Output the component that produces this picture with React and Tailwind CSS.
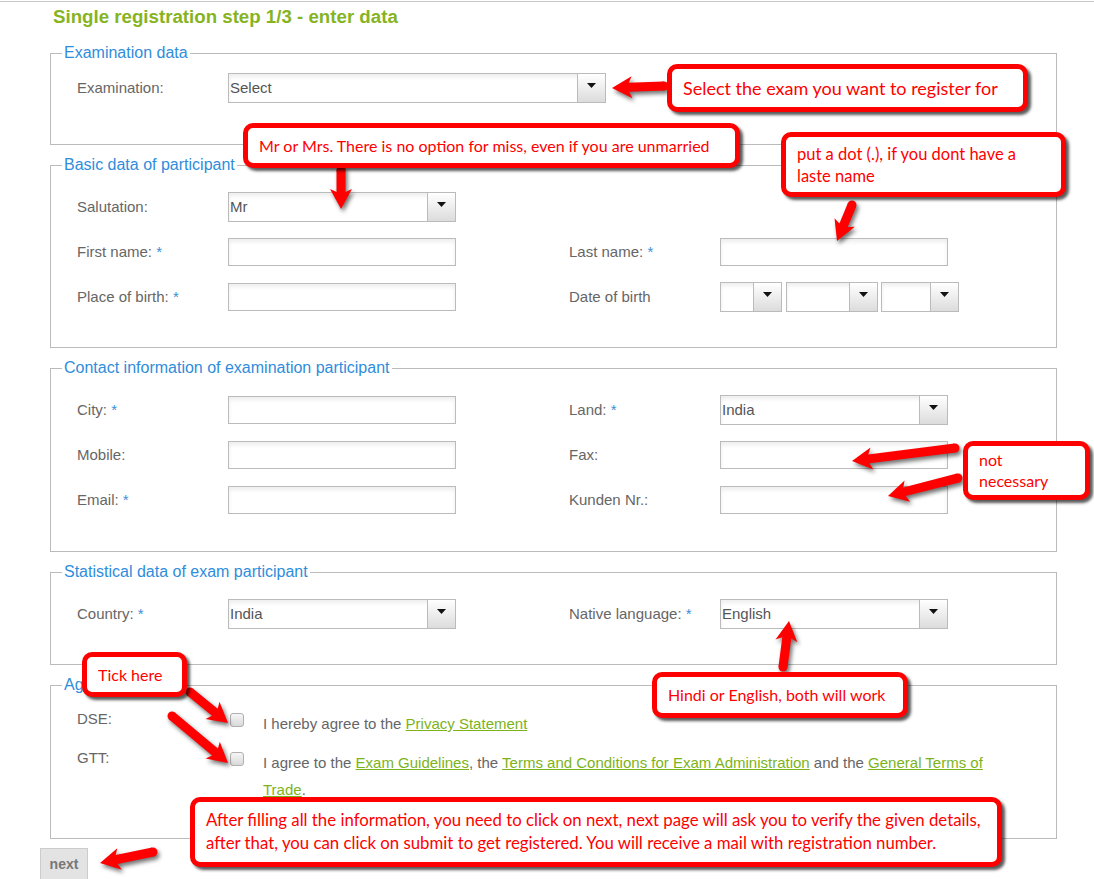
import React from 'react';

// red callout arrows drawn over the form
const ARROWS = [
  [[664, 86], [612, 88]],
  [[341, 170], [341, 209]],
  [[852, 205], [837, 241]],
  [[955, 448], [852, 461]],
  [[958, 478], [888, 496]],
  [[783, 667], [789, 621]],
  [[190, 692], [228, 723]],
  [[172, 716], [228, 763]],
  [[153, 852], [100, 863]],
];

function arrowPath([x1, y1], [x2, y2], w = 4.5, hw = 11, hl = 17) {
  const dx = x2 - x1, dy = y2 - y1, len = Math.hypot(dx, dy);
  const ux = dx / len, uy = dy / len, nx = -uy, ny = ux;
  const bx = x2 - ux * hl, by = y2 - uy * hl;
  const p = (x, y) => `${x.toFixed(1)} ${y.toFixed(1)}`;
  return [
    'M', p(x1 + nx * w, y1 + ny * w),
    'L', p(bx + nx * w, by + ny * w),
    'L', p(bx + nx * hw - ux * 3, by + ny * hw - uy * 3),
    'L', p(x2, y2),
    'L', p(bx - nx * hw - ux * 3, by - ny * hw - uy * 3),
    'L', p(bx - nx * w, by - ny * w),
    'L', p(x1 - nx * w, y1 - ny * w),
    'Z',
  ].join(' ');
}

function Arrows() {
  return (
    <svg className="pointer-events-none absolute left-0 top-0 drop-shadow-[2px_3px_2px_rgba(0,0,0,0.55)]" width="1094" height="879">
      {ARROWS.map(([a, b], i) => (
        <g key={i} fill="#ff0000">
          <path d={arrowPath(a, b)} />
          <circle cx={a[0]} cy={a[1]} r="4.5" />
        </g>
      ))}
    </svg>
  );
}

function Note({ className, children }) {
  return (
    <div className={`absolute rounded-[10px] border-[5px] border-[#ff0000] bg-white pl-[11px] font-['Lato',sans-serif] text-[#ff0000] shadow-[3px_3px_3px_rgba(0,0,0,0.65)] ${className}`}>
      {children}
    </div>
  );
}

function Req() {
  return <span className="text-[#3a8fd9]"> *</span>;
}

function Label({ children, req }) {
  return (
    <div className="w-[151px] shrink-0 text-[15px] text-[#666]">
      {children}
      {req && <Req />}
    </div>
  );
}

function TextBox({ className }) {
  return <div className={`h-[28px] border border-[#bbb] bg-white shadow-[inset_0_3px_4px_rgba(0,0,0,0.07)] ${className}`} />;
}

function SelectBox({ value, className }) {
  return (
    <div className={`flex h-[30px] border border-[#bbb] bg-white shadow-[inset_0_3px_4px_rgba(0,0,0,0.07)] ${className}`}>
      <span className="flex-1 pl-px text-[15px] leading-[28px] text-[#555]">{value}</span>
      <span className="flex w-[28px] justify-center border-l border-[#bbb] bg-linear-to-b from-white to-[#dcdcdc] pt-[9px]">
        <svg width="9" height="5" viewBox="0 0 9 5">
          <path d="M0 0h9L4.5 5z" fill="#111" />
        </svg>
      </span>
    </div>
  );
}

// left half of a row is a fixed column, right half takes what is left
function Cell({ children }) {
  return <div className="flex w-[492px] shrink-0 items-center">{children}</div>;
}

function RightCell({ children }) {
  return <div className="flex items-center">{children}</div>;
}

function Row({ children }) {
  return <div className="flex h-[30px] items-center">{children}</div>;
}

function Group({ title, className, children }) {
  return (
    <fieldset className={`ml-[50px] w-[1007px] min-w-0 border border-[#bbb] ${className}`}>
      <legend className="ml-[11px] px-[2px] text-[16px] leading-[18px] text-[#2f8ddb]">{title}</legend>
      {children}
    </fieldset>
  );
}

function Check() {
  return <div className="mt-[3px] h-[14px] w-[14px] shrink-0 rounded-[3px] border border-[#b0b0b0] bg-linear-to-b from-[#f6f6f6] to-[#dadada]" />;
}

function Link({ children }) {
  return <span className="text-[#7db31a] underline">{children}</span>;
}

export default function App() {
  return (
    <div className="relative h-[879px] w-[1094px] overflow-hidden bg-white font-['Liberation_Sans',Arial,sans-serif]">
      <div className="mt-px h-px bg-[#c8c8c8]" />
      <h1 className="mt-[4px] pl-[53px] text-[18.7px] font-bold leading-[22px] text-[#86b41f]">
        Single registration step 1/3 - enter data
      </h1>

      <Group title="Examination data" className="mt-[16px]">
        <div className="pl-[26px] pt-[11px] pb-[41px]">
          <Row>
            <Label>Examination:</Label>
            <SelectBox value="Select" className="w-[378px]" />
          </Row>
        </div>
      </Group>

      <Group title="Basic data of participant" className="mt-[11px]">
        <div className="flex flex-col gap-[15px] pl-[26px] pt-[18px] pb-[35px]">
          <Row>
            <Cell>
              <Label>Salutation:</Label>
              <SelectBox value="Mr" className="w-[228px]" />
            </Cell>
          </Row>
          <Row>
            <Cell>
              <Label req>First name:</Label>
              <TextBox className="w-[228px]" />
            </Cell>
            <RightCell>
              <Label req>Last name:</Label>
              <TextBox className="w-[228px]" />
            </RightCell>
          </Row>
          <Row>
            <Cell>
              <Label req>Place of birth:</Label>
              <TextBox className="w-[228px]" />
            </Cell>
            <RightCell>
              <Label>Date of birth</Label>
              <div className="flex">
                <SelectBox value="" className="w-[62px]" />
                <SelectBox value="" className="ml-[4px] w-[92px]" />
                <SelectBox value="" className="ml-[3px] w-[78px]" />
              </div>
            </RightCell>
          </Row>
        </div>
      </Group>

      <Group title="Contact information of examination participant" className="mt-[11px]">
        <div className="flex flex-col gap-[15px] pl-[26px] pt-[18px] pb-[36px]">
          <Row>
            <Cell>
              <Label req>City:</Label>
              <TextBox className="w-[228px]" />
            </Cell>
            <RightCell>
              <Label req>Land:</Label>
              <SelectBox value="India" className="w-[228px]" />
            </RightCell>
          </Row>
          <Row>
            <Cell>
              <Label>Mobile:</Label>
              <TextBox className="w-[228px]" />
            </Cell>
            <RightCell>
              <Label>Fax:</Label>
              <TextBox className="w-[228px]" />
            </RightCell>
          </Row>
          <Row>
            <Cell>
              <Label req>Email:</Label>
              <TextBox className="w-[228px]" />
            </Cell>
            <RightCell>
              <Label>Kunden Nr.:</Label>
              <TextBox className="w-[228px]" />
            </RightCell>
          </Row>
        </div>
      </Group>

      <Group title="Statistical data of exam participant" className="mt-[11px]">
        <div className="pl-[26px] pt-[18px] pb-[35px]">
          <Row>
            <Cell>
              <Label req>Country:</Label>
              <SelectBox value="India" className="w-[228px]" />
            </Cell>
            <RightCell>
              <Label req>Native language:</Label>
              <SelectBox value="English" className="w-[228px]" />
            </RightCell>
          </Row>
        </div>
      </Group>

      <Group title="Agreements" className="mt-[11px]">
        <div className="flex flex-col gap-[12px] pl-[26px] pt-[16px] pb-[35px] text-[15px] text-[#666]">
          <div className="flex items-start">
            <div className="w-[153px] shrink-0 leading-[18px]">DSE:</div>
            <Check />
            <div className="ml-[19px] w-[740px] leading-[27px]">
              I hereby agree to the <Link>Privacy Statement</Link>
            </div>
          </div>
          <div className="flex items-start">
            <div className="w-[153px] shrink-0 leading-[18px]">GTT:</div>
            <Check />
            <div className="ml-[19px] w-[740px] leading-[27px]">
              I agree to the <Link>Exam Guidelines</Link>, the <Link>Terms and Conditions for Exam Administration</Link> and the{' '}
              <Link>General Terms of Trade</Link>.
            </div>
          </div>
        </div>
      </Group>

      <button className="ml-[40px] mt-[9px] h-[32px] w-[48px] border border-[#ccc] bg-[#e3e3e3] text-[14px] font-bold text-[#777]">
        next
      </button>

      <Arrows />

      <Note className="left-[667px] top-[64px] flex h-[48px] w-[361px] items-center text-[18px]">
        Select the exam you want to register for
      </Note>
      <Note className="left-[243px] top-[123px] flex h-[45px] w-[497px] items-center text-[16px]">
        Mr or Mrs. There is no option for miss, even if you are unmarried
      </Note>
      <Note className="left-[781px] top-[132px] h-[65px] w-[285px] pt-[6px] text-[16.5px] leading-[22px]">
        put a dot (.), if you dont have a<br />laste name
      </Note>
      <Note className="left-[963px] top-[441px] h-[59px] w-[127px] pt-[3px] text-[16px] leading-[21px]">
        not<br />necessary
      </Note>
      <Note className="left-[652px] top-[672px] flex h-[46px] w-[256px] items-center text-[16px]">
        Hindi or English, both will work
      </Note>
      <Note className="left-[82px] top-[652px] flex h-[45px] w-[105px] items-center text-[16px]">
        Tick here
      </Note>
      <Note className="left-[190px] top-[797px] h-[70px] w-[812px] pt-[6px] text-[16.8px] leading-[23px]">
        After filling all the information, you need to click on next, next page will ask you to verify the given details,
        <br />
        after that, you can click on submit to get registered. You will receive a mail with registration number.
      </Note>
    </div>
  );
}
